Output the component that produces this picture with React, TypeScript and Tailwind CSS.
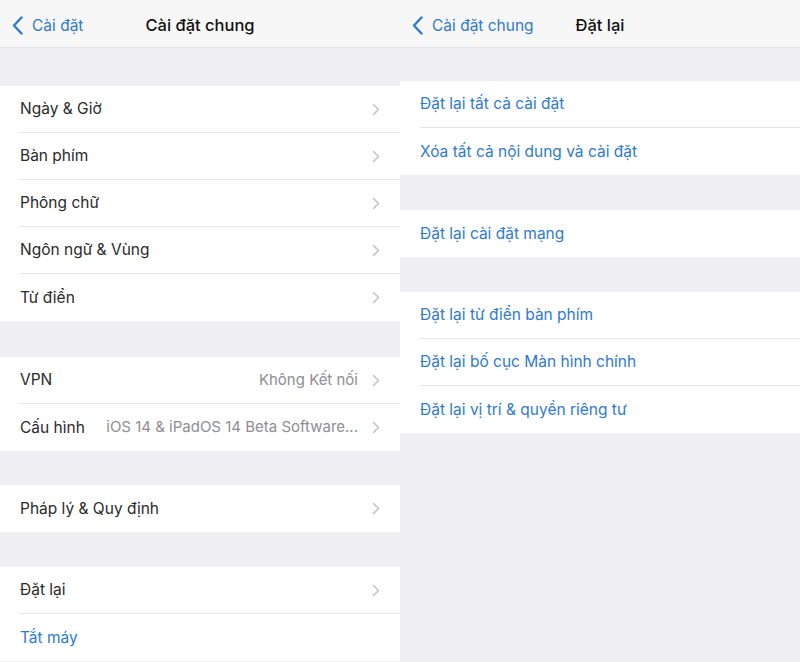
import { ReactNode } from "react";

const BLUE = "text-[#2f7acc]";

const Chevron = () => (
  <svg width="8" height="13" viewBox="0 0 8 13" fill="none" className="shrink-0">
    <path d="M1.5 1.5 L6.5 6.5 L1.5 11.5" stroke="#c4c4c8" strokeWidth="1.6" strokeLinecap="round" strokeLinejoin="round" />
  </svg>
);

const BackChevron = () => (
  <svg width="11" height="19" viewBox="0 0 11 19" fill="none">
    <path d="M9.5 1.5 L2 9.5 L9.5 17.5" stroke="#2f7acc" strokeWidth="2.4" strokeLinecap="round" strokeLinejoin="round" />
  </svg>
);

const NavBar = ({ back, title }: { back: string; title: string }) => (
  <div className="relative h-12 pt-[4px] flex items-center bg-[#f7f7f8] border-b border-[#e4e4e8]">
    <div className={`flex items-center gap-[9px] pl-[12px] text-[15.5px] ${BLUE}`}>
      <BackChevron />
      <span>{back}</span>
    </div>
    <div className="absolute inset-0 pt-[4px] flex items-center justify-center pointer-events-none">
      <span className="text-[16.5px] font-medium text-[#111]">{title}</span>
    </div>
  </div>
);

type Row = { label: string; value?: string; blue?: boolean; chevron?: boolean };

const Group = ({ rows }: { rows: Row[] }) => (
  <div className="bg-white">
    {rows.map((r, i) => (
      <div key={r.label} className="pl-5">
        <div
          className={`h-[47px] flex items-center pr-[20px] gap-[14px] ${
            i < rows.length - 1 ? "border-b border-[#e6e6ea]" : ""
          }`}
        >
          <span className={`shrink-0 text-[15.5px] ${r.blue ? BLUE : "text-[#2a2a2a]"}`}>{r.label}</span>
          <span className="flex-1 min-w-0 text-right whitespace-nowrap text-[15px] text-[#8e8e93]">{r.value ?? ""}</span>
          {r.chevron && <Chevron />}
        </div>
      </div>
    ))}
  </div>
);

const Gap = ({ h }: { h: string }) => <div className={h} />;

const Panel = ({ children }: { children: ReactNode }) => (
  <div className="w-[400px] h-[662px] bg-[#efeff4] flex flex-col overflow-hidden">{children}</div>
);

export default function App() {
  return (
    <div
      className="w-[800px] h-[662px] flex bg-[#efeff4] overflow-hidden"
      style={{ fontFamily: "Inter, 'Noto Sans', sans-serif" }}
    >
      <Panel>
        <NavBar back="Cài đặt" title="Cài đặt chung" />
        <Gap h="h-[38px]" />
        <Group
          rows={[
            { label: "Ngày & Giờ", chevron: true },
            { label: "Bàn phím", chevron: true },
            { label: "Phông chữ", chevron: true },
            { label: "Ngôn ngữ & Vùng", chevron: true },
            { label: "Từ điển", chevron: true },
          ]}
        />
        <Gap h="h-[36px]" />
        <Group
          rows={[
            { label: "VPN", value: "Không Kết nối", chevron: true },
            { label: "Cấu hình", value: "iOS 14 & iPadOS 14 Beta Software...", chevron: true },
          ]}
        />
        <Gap h="h-[34px]" />
        <Group rows={[{ label: "Pháp lý & Quy định", chevron: true }]} />
        <Gap h="h-[35px]" />
        <Group
          rows={[
            { label: "Đặt lại", chevron: true },
            { label: "Tắt máy", blue: true },
          ]}
        />
      </Panel>
      <Panel>
        <NavBar back="Cài đặt chung" title="Đặt lại" />
        <Gap h="h-[33px]" />
        <Group
          rows={[
            { label: "Đặt lại tất cả cài đặt", blue: true },
            { label: "Xóa tất cả nội dung và cài đặt", blue: true },
          ]}
        />
        <Gap h="h-[35px]" />
        <Group rows={[{ label: "Đặt lại cài đặt mạng", blue: true }]} />
        <Gap h="h-[35px]" />
        <Group
          rows={[
            { label: "Đặt lại từ điển bàn phím", blue: true },
            { label: "Đặt lại bố cục Màn hình chính", blue: true },
            { label: "Đặt lại vị trí & quyền riêng tư", blue: true },
          ]}
        />
      </Panel>
    </div>
  );
}
